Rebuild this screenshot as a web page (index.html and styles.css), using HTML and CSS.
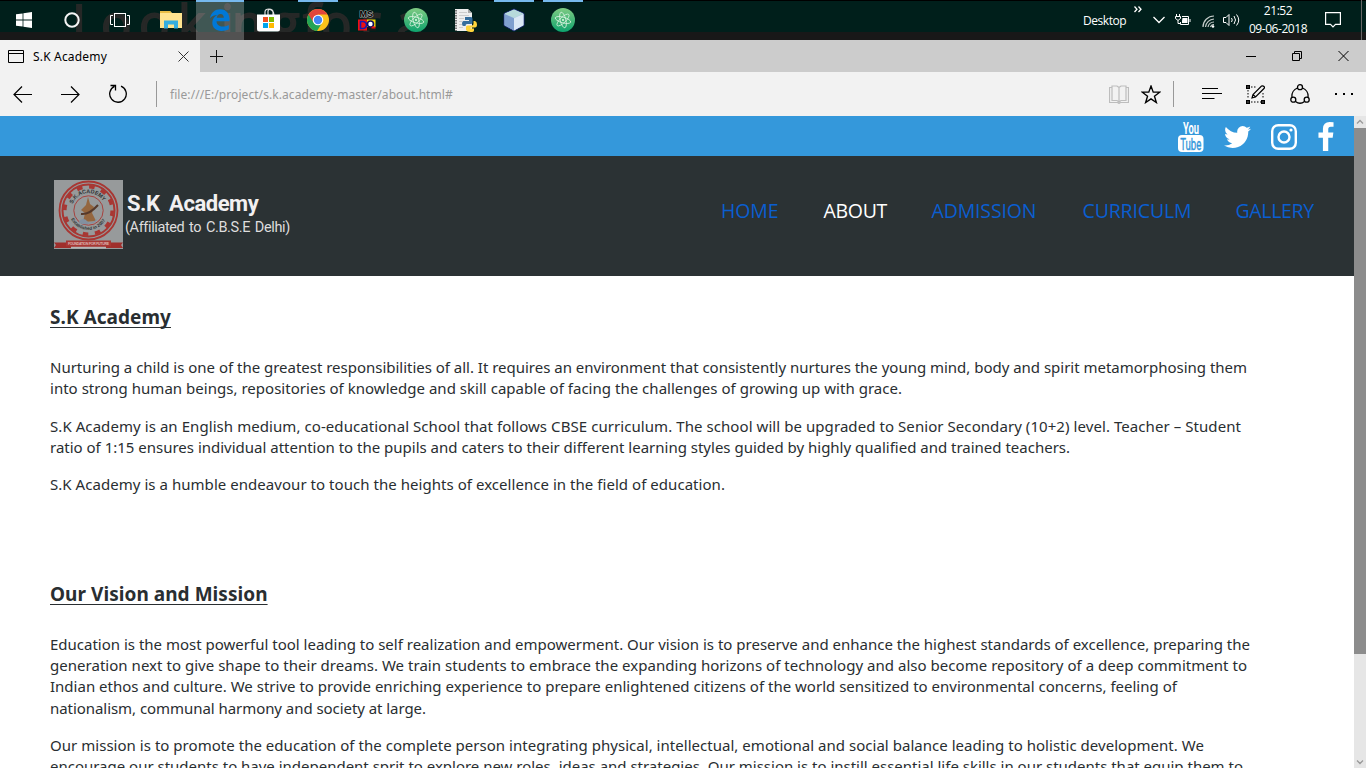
FILE: index.html
```html
<!DOCTYPE html>
<html lang="en">
<head>
<meta charset="utf-8">
<title>S.K Academy</title>
<link rel="stylesheet" href="styles.css">
</head>
<body>
<svg class="defs" width="0" height="0">
  <symbol id="atom" viewBox="0 0 24 24">
    <circle cx="12" cy="12" r="12" fill="url(#atomfill)"/>
    <g fill="none" stroke="#d9f2df" stroke-width=".8">
      <ellipse cx="12" cy="12" rx="2.800" ry="8" transform="rotate(-14 12 12)"/>
      <ellipse cx="12" cy="12" rx="2.800" ry="8" transform="rotate(46 12 12)"/>
      <ellipse cx="12" cy="12" rx="2.800" ry="8" transform="rotate(106 12 12)"/>
    </g>
    <circle cx="12" cy="12" r="1" fill="#e6f8e8"/>
  </symbol>
  <linearGradient id="atomfill" x1="0" y1="0" x2="0" y2="1"><stop offset="0" stop-color="#7fcb83"/><stop offset="1" stop-color="#0ea36d"/></linearGradient>
</svg>

<div class="taskbar">
  <svg class="ghost" width="600" height="32"><text x="72 101 139 178 221 232 272 303 321 360 396" y="42">Lookingfora</text></svg>
  <div class="apps">
    <div class="sys"><svg width="16" height="16" viewBox="0 0 16 16" fill="#fff"><path d="M0 2.3 6.6 1.4V7.5H0zM7.4 1.2 16 0V7.5H7.4zM0 8.4H6.6V14.6L0 13.7zM7.4 8.4H16V16L7.4 14.8z"/></svg></div>
    <div class="sys"><svg width="16" height="16" viewBox="0 0 16 16"><circle cx="8" cy="8" r="6.700" fill="none" stroke="#f4f4f4" stroke-width="2"/></svg></div>
    <div class="sys"><svg width="20" height="16" viewBox="0 0 20 16" fill="none" stroke="#fff"><rect x="4.500" y="1.500" width="11" height="13"/><path d="M3 3.500H.5v9H3M17 3.500h2.500v9H17"/></svg></div>
    <div class="app first"><svg width="22" height="20" viewBox="0 0 22 20"><path d="M0 1H10L12 3H22V18H0z" fill="#ffe38f"/><path d="M0 1h10l1.500 2H0z" fill="#e9bd45"/><path d="M4 18.500V10.500H18V18.500H14V14.500H8V18.500z" fill="#35aee0"/></svg></div>
    <div class="app current"><svg width="20" height="22" viewBox="0 0 20 22"><path d="M0 9.300C1 3.500 5 .2 10.300 .2 16.500 .2 20 5 19.600 12.300H6.500C6.700 16 9.500 17.600 12.500 17.600 14.900 17.600 16.900 17 18.800 15.900V20.300C16.700 21.400 14.300 22 11.500 22 5.700 22 2.300 18.500 2.300 13.800 2.300 10.200 4.300 7.300 7.500 5.800 4.500 6.100 1.800 7.200 0 9.300zM6.700 8.700H13.800C13.800 6.300 12.700 4.900 10.500 4.900 8.500 4.900 7 6.500 6.700 8.700z" fill="#0078d7" fill-rule="evenodd"/></svg></div>
    <div class="app"><svg width="24" height="24" viewBox="0 0 24 24"><path d="M8 7V4Q8 1 12 1T16 4V7M11 7V3Q12 0 15 2.500 17 4 17 7" fill="none" stroke="#ddd" stroke-width="1.200"/><path d="M0 6.500H23V21Q23 23.500 20.500 23.500H2.500Q0 23.500 0 21z" fill="#fff"/><path d="M6 9h5v5H6z" fill="#f25022"/><path d="M12 9h5v5h-5z" fill="#7fba00"/><path d="M6 15h5v5H6z" fill="#00a4ef"/><path d="M12 15h5v5h-5z" fill="#ffb900"/></svg></div>
    <div class="app open"><svg width="22" height="22" viewBox="0 0 22 22"><circle cx="11" cy="11" r="11" fill="#fbc21b"/><path d="M11 11 1.500 5.500A11 11 0 0 0 10 22L15.300 13.500z" fill="#23a455"/><path d="M1.500 5.500A11 11 0 0 1 20.500 5.500H11L6.500 13.500z" fill="#e2463b"/><circle cx="11" cy="11" r="5.300" fill="#fff"/><circle cx="11" cy="11" r="4.200" fill="#4285f4"/></svg></div>
    <div class="app"><svg width="18" height="22" viewBox="0 0 18 22"><text x="1.500" y="8" class="ms">MS</text><path d="M0 10.500H9V21.500H0z" fill="#f01010"/><path d="M9 10.500H17.500V18H9z" fill="#f5d800"/><path d="M9 18H18V21.500H9z" fill="#181818"/><path d="M2.500 12.500H5Q8.500 13 8.500 16T5 19.500H2.500z" fill="none" stroke="#1818b0" stroke-width="1.600"/><circle cx="12.500" cy="15" r="3" fill="#fff" stroke="#101060" stroke-width="1.600"/><path d="M13.500 17.500H17.500V19.500H13.500z" fill="#e01010"/></svg></div>
    <div class="app"><svg width="24" height="24"><use href="#atom"/></svg></div>
    <div class="app"><svg width="24" height="24" viewBox="0 0 24 24"><path d="M2 1H15L19 5V23H2z" fill="#eee"/><path d="M15 1V5H19z" fill="#aaa"/><path d="M3 2V23" stroke="#555" stroke-width="1.500" stroke-dasharray="1.500 1"/><path d="M6 4.500h8M6 7.500h10M6 10.500h5M6 13.500h3M6 16.500h3M6 19.500h4" stroke="#ccc"/><path d="M12 9H18Q19.500 9 19.500 11V14.500Q19.500 16 18 16H14Q12.500 16 12.500 18H10.500Q9 18 9 15.500T10.500 13H16V12H12z" fill="#356d9c"/><path d="M20.500 13H22Q24 13.500 24 16.500T22 19.500H17.500V20.500H21V22.500Q21 24 17.500 24T13 22V19Q13 17.500 14.500 17.500H19Q20.500 17.500 20.500 15.500z" fill="#ffd43b"/></svg></div>
    <div class="app open"><svg width="22" height="24" viewBox="0 0 22 24"><path d="M11 1 21 5.500V17.500L11 23 1 17.500V5.500z" fill="#a9c7e4" stroke="#17236b"/><path d="M11 1.500 20.500 5.600 11 10 1.500 5.600z" fill="#b7dadb"/><path d="M1.500 6 11 10.300V22.500L1.500 17.200z" fill="#7f9fce"/><path d="M11 10.300 20.500 6V17.200L11 22.500z" fill="#dbe8f5"/></svg></div>
    <div class="app open"><svg width="24" height="24"><use href="#atom"/></svg></div>
  </div>
  <div class="tray">
    <span class="desktop">Desktop</span>
    <svg class="more" width="8" height="7" viewBox="0 0 8 7" fill="none" stroke="#fff" stroke-width="1.300"><path d="M.5.500 3 3.200.5 6M4.500.500 7 3.200 4.500 6"/></svg>
    <svg class="chev" width="12" height="8" viewBox="0 0 12 8" fill="none" stroke="#fff" stroke-width="1.300"><path d="M.5 1 6 6.500 11.500 1"/></svg>
    <svg class="battery" width="16" height="12" viewBox="0 0 16 12"><path d="M7 2.500H13.500V10.500H5.500V8M15 5V8" fill="none" stroke="#fff"/><path d="M7.500 4H12.500V9H7V6.500z" fill="#fff"/><path d="M1.500 0V2M4.500 0V2M.5 2.500H5.500V4.500L3.500 6H2.500L.5 4.500zM3 6V9.500H5" fill="none" stroke="#fff"/></svg>
    <svg class="wifi" width="14" height="13" viewBox="0 0 14 13" fill="none" stroke="#c5cdcb" stroke-width="1.200"><path d="M1 12A11 11 0 0 1 12 1M3.500 12A9 9 0 0 1 12 4M6 12A6 6 0 0 1 12 7M8.500 12A3.500 3.500 0 0 1 12 9.500"/><circle cx="11" cy="11.500" r="1.300" fill="#fff" stroke="none"/></svg>
    <svg class="speaker" width="17" height="14" viewBox="0 0 17 14" fill="none" stroke="#fff"><path d="M.5 4.500H3L6 1.500V12.500L3 9.500H.5zM8.500 5Q10 7 8.500 9M11 3Q14 7 11 11M13.500 1.500Q18 7 13.500 12.500"/></svg>
    <div class="clock"><span>21:52</span><span>09-06-2018</span></div>
    <svg class="note" width="16" height="16" viewBox="0 0 16 16" fill="none" stroke="#fff" stroke-width="1.200"><path d="M.6.600H15.400V12.400H10.500L8 15 5.500 12.400H.6z"/></svg>
    <i class="peek"></i>
  </div>
</div>

<div class="tabs">
  <div class="tab">
    <svg width="16" height="13" viewBox="0 0 16 13" fill="none" stroke="#000"><path d="M.5.500H15.500V12.500H.5zM.5 3.500H15.500"/></svg>
    <span>S.K Academy</span>
    <svg class="tab-x" width="11" height="11" viewBox="0 0 11 11" stroke="#333" fill="none"><path d="M.5.500 10.500 10.500M10.500.500.500 10.500"/></svg>
  </div>
  <svg class="plus" width="13" height="13" viewBox="0 0 13 13" stroke="#111"><path d="M6.500 0V13M0 6.500H13"/></svg>
  <div class="win">
    <svg width="10" height="10" viewBox="0 0 10 10" stroke="#000"><path d="M0 5.500H10"/></svg>
    <svg width="10" height="10" viewBox="0 0 10 10" stroke="#000" fill="none"><path d="M.5 2.500H7.500V9.500H.5zM2.500 2.500V.5H9.500V7.500H7.500"/></svg>
    <svg width="11" height="10" viewBox="0 0 11 10" stroke="#000" fill="none"><path d="M.5 0 10.500 10M10.500 0 .5 10"/></svg>
  </div>
</div>

<div class="toolbar">
  <svg class="back" width="19" height="17" viewBox="0 0 19 17" fill="none" stroke="#000" stroke-width="1.200"><path d="M19 8.500H1M9 .5 1 8.500 9 16.500"/></svg>
  <svg class="fwd" width="19" height="17" viewBox="0 0 19 17" fill="none" stroke="#000" stroke-width="1.200"><path d="M0 8.500H18M10 .5 18 8.500 10 16.500"/></svg>
  <svg class="reload" width="18" height="19" viewBox="0 0 18 19" fill="none" stroke="#000" stroke-width="1.300"><path d="M12 2.200A8.300 8.300 0 1 1 5.500 2.400M1.500 1.500H6.500V6.500"/></svg>
  <i class="bar"></i>
  <span class="url">file:///E:/project/s.k.academy-master/about.html#</span>
  <div class="tools">
    <svg class="book" width="20" height="19" viewBox="0 0 20 19" fill="none" stroke="#bdbdbd" stroke-width="1.200"><path d="M3.500 2.500H.5V17.500H8.500L10 18.500 11.500 17.500H19.500V2.500H16.500M3 1H8L10 2.500 12 1H17V15.500H12L10 17 8 15.500H3zM10 2.500V17"/></svg>
    <svg class="star" width="20" height="19" viewBox="0 0 19 18" fill="none" stroke="#000" stroke-width="1.300"><path d="M9.500 1 11.600 6.800H17.700L12.800 10.600 14.600 16.600 9.500 13.100 4.400 16.600 6.200 10.600 1.300 6.800H7.400z"/></svg>
    <i class="bar"></i>
    <svg class="hub" width="20" height="12" viewBox="0 0 20 12" stroke="#000"><path d="M0 .5H16M0 5.500H20M0 10.500H12.500"/></svg>
    <svg class="pen" width="19" height="19" viewBox="0 0 19 19" fill="none" stroke="#000"><path d="M5 2H11M2 5V14M5 17H15M17 8V14" stroke-dasharray="1.500 1.500"/><path d="M.8.800h2.400v2.400H.8zM.8 15.800h2.400v2.400H.8zM15.800 15.800h2.400v2.400h-2.400z" stroke-width="1.600"/><path d="M6 13 7 9.500 15.500 1Q17 .5 18 1.500T18 3.500L9.500 12zM7 9.500 9.500 12" stroke-width="1.200"/></svg>
    <svg class="share" width="20" height="20" viewBox="0 0 20 20" fill="none" stroke="#000" stroke-width="1.300"><path d="M7.500 4A8.500 8.500 0 0 0 2 13M12.500 4A8.500 8.500 0 0 1 18 13M5.500 17.500Q10 21 14.500 17.500"/><circle cx="10" cy="3.200" r="2.500"/><circle cx="3.300" cy="15.700" r="2.500"/><circle cx="16.700" cy="15.700" r="2.500"/></svg>
    <svg class="dots" width="18" height="3" viewBox="0 0 18 3"><path d="M0 0h2v2H0zM8 0h2v2H8zM16 0h2v2h-2z"/></svg>
  </div>
</div>

<div class="viewport">
  <div class="page">
    <div class="social">
      <svg width="26" height="34" viewBox="0 0 26 34"><text class="yt" x="5" y="14" textLength="16" lengthAdjust="spacingAndGlyphs" fill="#fff">You</text><rect x="0" y="15" width="25.500" height="17" rx="4" fill="#fff"/><text class="yt tube" x="2.300" y="29.500" textLength="21" lengthAdjust="spacingAndGlyphs" fill="#3498db">Tube</text></svg>
      <svg width="27" height="22" viewBox="108 256 1576 1280" fill="#fff"><path d="M1684 408q-67 98-162 167 1 14 1 42 0 130-38 259.500t-115.500 248.500-184.500 210.500-258 146-323 54.500q-271 0-496-145 35 4 78 4 225 0 401-138-105-2-188-64.500t-114-159.500q33 5 61 5 43 0 85-11-112-23-185.500-111.500t-73.500-205.500v-4q68 38 146 41-66-44-105-115t-39-154q0-88 44-163 121 149 294.500 238.500t371.500 99.500q-8-38-8-74 0-134 94.500-228.500t228.500-94.500q140 0 236 102 109-21 205-78-37 115-142 178 93-10 186-50z"/></svg>
      <svg width="26" height="26" viewBox="0 0 26 26" fill="none" stroke="#fff"><rect x="1.200" y="1.200" width="23.600" height="23.600" rx="6" stroke-width="2.400"/><circle cx="13" cy="13" r="5.500" stroke-width="2.400"/><circle cx="20" cy="6" r="1.600" fill="#fff" stroke="none"/></svg>
      <svg class="fb" width="16" height="29" viewBox="479 0 864 1664" fill="#fff"><path d="M1343 12v264h-157q-86 0-116 36t-30 108v189h293l-39 296h-254v759h-306v-759h-255v-296h255v-218q0-186 104-288.500t277-102.500q147 0 228 12z"/></svg>
    </div>
    <div class="header">
      <svg class="seal" width="69" height="69" viewBox="0 0 69 69">
        <rect width="69" height="69" fill="#979a9b"/>
        <circle cx="34.500" cy="30.500" r="29" fill="none" stroke="#a83733" stroke-width="1.800"/>
        <circle cx="34.500" cy="30.500" r="26" fill="none" stroke="#a83733" stroke-width="2"/>
        <circle cx="34.500" cy="30.500" r="23.700" fill="none" stroke="#a83733" stroke-width="3.600" stroke-dasharray="5.600 6.800"/>
        <circle cx="34.500" cy="30.500" r="14.700" fill="none" stroke="#a83733" stroke-width=".9"/>
        <path id="arcTop" d="M18.500 24A17.200 17.200 0 0 1 50.500 24" fill="none"/>
        <path id="arcBottom" d="M17 39A19.500 19.500 0 0 0 52 39" fill="none"/>
        <text class="arc"><textPath href="#arcTop" textLength="38">S.K.ACADEMY</textPath></text>
        <text class="arc small"><textPath href="#arcBottom" textLength="42">Established in 2007</textPath></text>
        <path d="M34 17 36 24 40 27 38 33 42 41 29 42 31 33 27 30 32 25z" fill="#94663f"/>
        <path d="M27 34Q35 35 44 25" fill="none" stroke="#55392b" stroke-width="2"/>
        <path d="M25 41Q30 37 33 41T43 39Q43 43 34 44T25 41" fill="#8290a0"/>
        <path d="M0 62.500H69L67 65 69 68H0L2 65z" fill="#a02f2c"/>
        <path d="M12 60.500H57V66.500H12z" fill="#a83733"/><path d="M17 66.800H52V68.500H17z" fill="#b6b6b6"/>
        <text class="motto" x="14" y="65" textLength="41">FOUNDATION FOR FUTURE</text>
      </svg>
      <div class="brand"><b>S.K Academy</b><span>(Affiliated to C.B.S.E Delhi)</span></div>
      <div class="nav"><a>HOME</a><a class="active">ABOUT</a><a>ADMISSION</a><a>CURRICULM</a><a>GALLERY</a></div>
    </div>
    <div class="content">
      <h2>S.K Academy</h2>
      <p><span class="t1">Nurturing a child is one of the greatest responsibilities of all. It requires an environment that consistently nurtures the young mind, body and spirit metamorphosing them</span><span class="t2">into strong human beings, repositories of knowledge and skill capable of facing the challenges of growing up with grace.</span></p>
      <p><span class="t3">S.K Academy is an English medium, co-educational School that follows CBSE curriculum. The school will be upgraded to Senior Secondary (10+2) level. Teacher – Student</span><span class="t4">ratio of 1:15 ensures individual attention to the pupils and caters to their different learning styles guided by highly qualified and trained teachers.</span></p>
      <p><span class="t5">S.K Academy is a humble endeavour to touch the heights of excellence in the field of education.</span></p>
      <h2 class="vision">Our Vision and Mission</h2>
      <p><span>Education is the most powerful tool leading to self realization and empowerment. Our vision is to preserve and enhance the highest standards of excellence, preparing the</span><span class="t6">generation next to give shape to their dreams. We train students to embrace the expanding horizons of technology and also become repository of a deep commitment to</span><span class="t7">Indian ethos and culture. We strive to provide enriching experience to prepare enlightened citizens of the world sensitized to environmental concerns, feeling of</span><span class="t8">nationalism, communal harmony and society at large.</span></p>
      <p><span class="t6">Our mission is to promote the education of the complete person integrating physical, intellectual, emotional and social balance leading to holistic development. We</span><span class="t9">encourage our students to have independent sprit to explore new roles, ideas and strategies. Our mission is to instill essential life skills in our students that equip them to</span></p>
    </div>
  </div>
  <div class="scroll">
    <svg width="12" height="12" viewBox="0 0 12 12" fill="none" stroke="#999" stroke-width="1.300"><path d="M3 7.500 6 4.500 9 7.500"/></svg>
    <i class="thumb"></i>
    <svg class="down" width="12" height="12" viewBox="0 0 12 12" fill="none" stroke="#999" stroke-width="1.300"><path d="M3 4.500 6 7.500 9 4.500"/></svg>
  </div>
</div>
</body>
</html>
```
FILE: styles.css
```css
* { box-sizing: border-box; }
body { margin: 0; width: 1366px; height: 768px; overflow: hidden; display: flex; flex-direction: column; font-family: "Noto Sans", sans-serif; background: #fff; }
svg { display: block; flex: none; }
.defs { position: absolute; }

.taskbar { position: relative; height: 40px; flex: none; display: flex; justify-content: space-between; background: linear-gradient(#000 0 1px, #001f1b 1px 32px, #181818 32px); color: #fff; }
.ghost { position: absolute; left: 0; top: 0; overflow: hidden; }
.ghost text { font-family: "Open Sans", sans-serif; font-size: 51px; fill: #262827; stroke: #262827; stroke-width: 1.800px; }
.apps { position: relative; display: flex; }
.sys, .app { width: 48px; height: 40px; display: flex; align-items: center; justify-content: center; }
.app { margin-right: 1px; position: relative; }
.app.first { margin-left: 3px; }
.current { background: rgba(255, 255, 255, .25); border-top: 2px solid #76b9ed; padding-bottom: 2px; }
.open::before { content: ""; position: absolute; left: 4px; top: 0; width: 40px; height: 2px; background: #76b9ed; }
.ms { font: bold 9px "Liberation Sans", sans-serif; fill: #000; stroke: #b5b5b5; stroke-width: 1px; paint-order: stroke; }
.tray { position: relative; display: flex; align-items: center; font: 12px "Open Sans", sans-serif; }
.desktop { width: 43px; letter-spacing: -.45px; white-space: nowrap; }
.more { margin: -22px 0 0 8px; }
.chev { margin-left: 11px; }
.battery { margin-left: 10px; }
.wifi { margin: 3px 0 0 11px; }
.speaker { margin-left: 7px; }
.clock { width: 60px; margin-left: 8px; display: flex; flex-direction: column; align-items: center; line-height: 18px; letter-spacing: -.45px; padding-bottom: 1px; }
.note { margin-left: 17px; }
.peek { width: 1px; height: 40px; background: #666; margin: 0 4px 0 20px; }

.tabs { height: 32px; flex: none; display: flex; align-items: center; background: #ccc; }
.tab { width: 200px; height: 32px; background: #f2f2f2; display: flex; align-items: center; padding: 0 11px 0 8px; font-size: 12px; letter-spacing: .18px; }
.tab span { margin-left: 9px; }
.tab-x { margin-left: auto; }
.plus { margin-left: 10px; }
.win { display: flex; gap: 36px; margin-left: auto; padding-right: 17px; }

.toolbar { height: 44px; flex: none; display: flex; align-items: center; background: #f2f2f2; padding-left: 13px; }
.fwd { margin-left: 29px; }
.reload { margin-left: 29px; margin-top: -2px; }
.bar { width: 1px; height: 26px; background: #999; }
.toolbar > .bar { margin-left: 29px; }
.url { margin-left: 13px; font-size: 12px; letter-spacing: .07px; color: #999; }
.tools { display: flex; align-items: center; margin-left: auto; padding-right: 13px; }
.star { margin-left: 12px; }
.tools .bar { margin-left: 12px; }
.hub { margin-left: 28px; }
.pen { margin-left: 24px; }
.share { margin-left: 25px; }
.dots { margin-left: 25px; }

.viewport { flex: 1; min-height: 0; display: flex; }
.page { width: 1354px; overflow: hidden; }
.social { height: 40px; background: #3498db; display: flex; align-items: center; justify-content: flex-end; gap: 20px; padding: 2px 20px 0 0; }
.fb { margin: -2px 0 0 1px; }
.yt { font: bold 16px "Roboto", sans-serif; }
.tube { font-weight: normal; font-size: 16px; stroke: #3498db; stroke-width: .4px; }
.header { height: 120px; background: #2b3234; display: flex; align-items: flex-start; padding: 24px 39px 0 54px; }
.arc { font: bold 5.500px "Liberation Sans", sans-serif; fill: #303435; }
.arc.small { font-size: 4.500px; }
.motto { font: bold 3.500px "Liberation Sans", sans-serif; fill: #dcb6b4; }
.brand { display: flex; flex-direction: column; margin: 11px 0 0 2px; color: #f2f0f1; font-family: Roboto, sans-serif; white-space: nowrap; }
.brand b { font-size: 22px; line-height: 26px; padding-left: 2px; letter-spacing: -.45px; word-spacing: 4.500px; }
.brand span { font-size: 14.500px; line-height: 22px; letter-spacing: -.38px; word-spacing: 1.500px; color: #deddde; }
.nav { margin: 17px 0 0 auto; display: grid; grid-template-columns: 102.500px 108px 151px 153px 79.500px; font: 19.500px/28px "Open Sans", sans-serif; letter-spacing: -.15px; color: #0a5ed0; white-space: nowrap; }
.nav .active { color: #fff; letter-spacing: -.3px; }
.nav a:last-child { letter-spacing: -.35px; }
.content { padding: 28px 0 0 50px; color: #292e31; white-space: nowrap; }
h2 { margin: 0 0 27px; font-size: 19px; line-height: 26px; letter-spacing: .05px; text-decoration: underline; text-decoration-thickness: 1px; text-underline-offset: 3px; text-decoration-skip-ink: none; }
.vision { margin-top: 85px; }
p { margin: 0 0 16px; font-size: 15px; line-height: 21.330px; }
p span { display: block; }
.t1 { letter-spacing: -.016px; }
.t2 { letter-spacing: .023px; }
.t3 { letter-spacing: .069px; }
.t4 { letter-spacing: -.005px; }
.t5 { letter-spacing: .044px; }
.t6 { letter-spacing: .031px; }
.t7 { letter-spacing: .009px; }
.t8 { letter-spacing: -.055px; }
.t9 { letter-spacing: -.009px; }
.scroll { width: 12px; background: #e6e6e6; display: flex; flex-direction: column; }
.thumb { height: 526px; background: #8c8c8c; }
.down { margin-top: auto; }
```
